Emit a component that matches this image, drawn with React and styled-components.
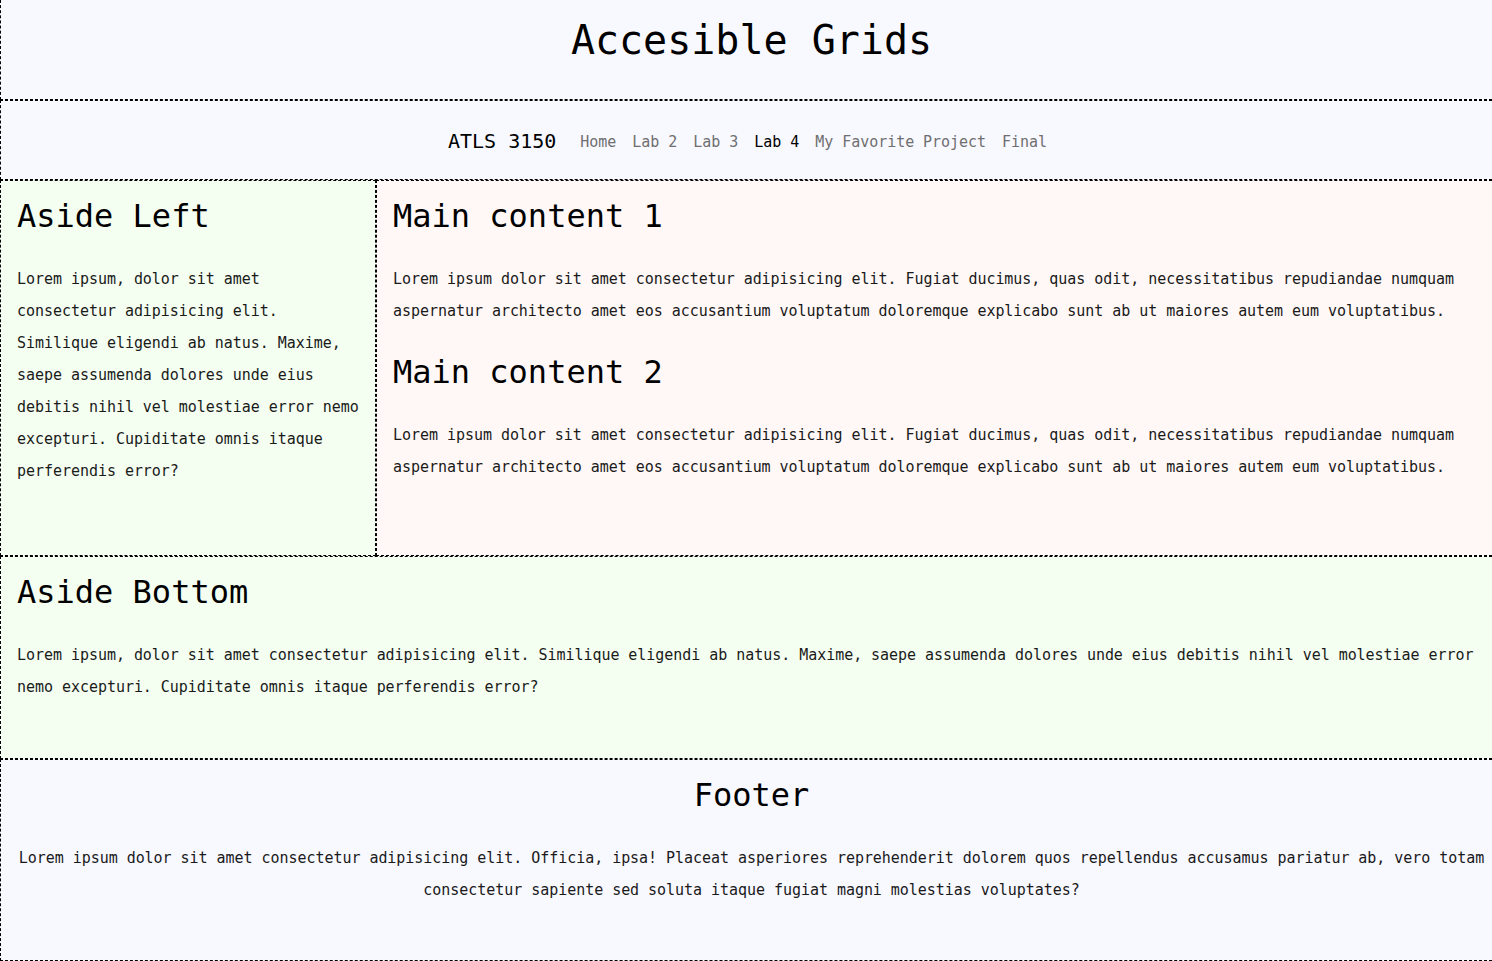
import React from 'react';
import styled, { createGlobalStyle } from 'styled-components';

const GlobalStyle = createGlobalStyle`
	html, body {
		margin: 0;
		padding: 0;
		overflow: hidden;
	}
	body {
		font-family: "DejaVu Sans Mono", "Liberation Mono", monospace;
		color: #111;
	}
`;

const Page = styled.div`
	display: grid;
	width: 1502px;
	grid-template-columns: 376px 1fr;
	grid-template-rows: 100px 80px 376px 203px 202px;
	grid-template-areas:
		'header header'
		'nav nav'
		'left main'
		'bottom bottom'
		'footer footer';
`;

const Section = styled.div`
	grid-area: ${(p) => p.$area};
	box-sizing: border-box;
	border: 1px dashed #000;
	border-top: ${(p) => (p.$noTop ? 'none' : '1px dashed #000')};
	border-right: ${(p) => (p.$right ? '1px dashed #000' : 'none')};
	background: ${(p) => p.$bg};
	padding: 16px;
	text-align: ${(p) => (p.$center ? 'center' : 'left')};
	overflow: hidden;
`;

const Title = styled.h1`
	font-size: 40px;
	font-weight: 400;
	line-height: 48px;
	margin: 0;
	text-align: center;
	color: #000;
`;

const Nav = styled.nav`
	grid-area: nav;
	box-sizing: border-box;
	border-left: 1px dashed #000;
	border-top: 1px dashed #000;
	border-bottom: 1px dashed #000;
	background: #f8f8ff;
	display: flex;
	align-items: center;
	justify-content: center;
	gap: 24px;
	padding: 2px 8px 0 0;
`;

const Brand = styled.span`
	font-size: 20px;
	color: #000;
`;

const Links = styled.ul`
	display: flex;
	gap: 16px;
	list-style: none;
	margin: 0;
	padding: 0;
`;

const Link = styled.a`
	font-size: 15px;
	letter-spacing: -0.04px;
	text-decoration: none;
	color: ${(p) => (p.$active ? '#000' : '#6f6f6f')};
`;

const Heading = styled.h2`
	font-size: 32px;
	font-weight: 400;
	line-height: 39px;
	margin: 0 0 26.5px;
	color: #000;
`;

const Text = styled.p`
	font-size: 15px;
	letter-spacing: -0.04px;
	line-height: 32px;
	margin: 0 0 26.5px;
	color: #1a1a1a;
`;

const navItems = ['Home', 'Lab 2', 'Lab 3', 'Lab 4', 'My Favorite Project', 'Final'];

const mainText =
	'Lorem ipsum dolor sit amet consectetur adipisicing elit. Fugiat ducimus, quas odit, necessitatibus repudiandae numquam aspernatur architecto amet eos accusantium voluptatum doloremque explicabo sunt ab ut maiores autem eum voluptatibus.';
const asideText =
	'Lorem ipsum, dolor sit amet consectetur adipisicing elit. Similique eligendi ab natus. Maxime, saepe assumenda dolores unde eius debitis nihil vel molestiae error nemo excepturi. Cupiditate omnis itaque perferendis error?';

export default function App() {
	return (
		<>
			<GlobalStyle />
			<Page>
				<Section $area="header" $bg="#f8f8ff" $noTop>
					<Title>Accesible Grids</Title>
				</Section>
				<Nav>
					<Brand>ATLS 3150</Brand>
					<Links>
						{navItems.map((item) => (
							<li key={item}>
								<Link href="#" $active={item === 'Lab 4'}>
									{item}
								</Link>
							</li>
						))}
					</Links>
				</Nav>
				<Section $area="left" $bg="#f4fff1" $right>
					<Heading>Aside Left</Heading>
					<Text>{asideText}</Text>
				</Section>
				<Section $area="main" $bg="#fff8f6">
					<Heading>Main content 1</Heading>
					<Text>{mainText}</Text>
					<Heading>Main content 2</Heading>
					<Text>{mainText}</Text>
				</Section>
				<Section $area="bottom" $bg="#f4fff1">
					<Heading>Aside Bottom</Heading>
					<Text>{asideText}</Text>
				</Section>
				<Section $area="footer" $bg="#f8f8ff" $center>
					<Heading>Footer</Heading>
					<Text>
						Lorem ipsum dolor sit amet consectetur adipisicing elit. Officia, ipsa! Placeat
						asperiores reprehenderit dolorem quos repellendus accusamus pariatur ab, vero totam
						consectetur sapiente sed soluta itaque fugiat magni molestias voluptates?
					</Text>
				</Section>
			</Page>
		</>
	);
}
